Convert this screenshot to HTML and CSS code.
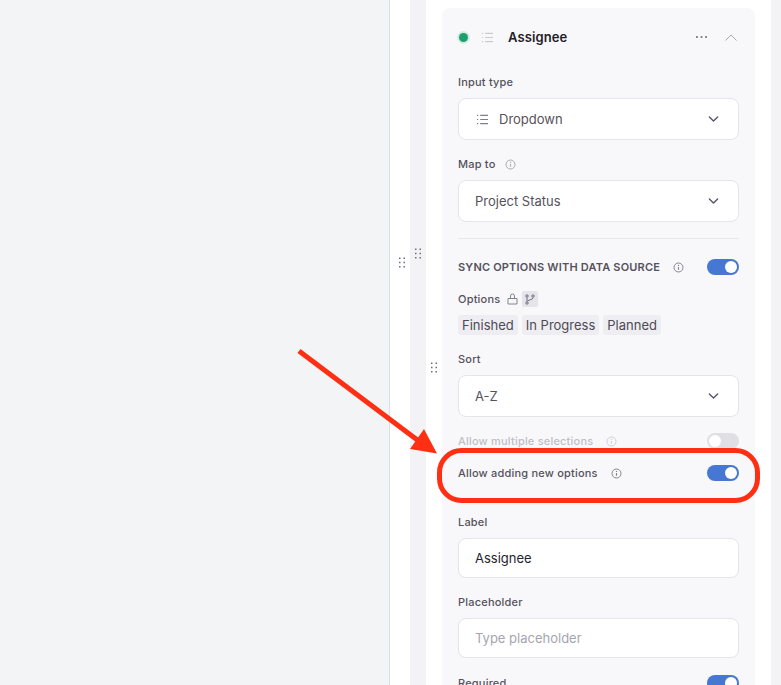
FILE: index.html
```html
<!DOCTYPE html>
<html lang="en">
<head>
<meta charset="utf-8">
<title>Assignee field settings</title>
<link rel="stylesheet" href="styles.css">
</head>
<body>
<svg width="0" height="0" class="defs">
  <defs>
    <symbol id="i-list" viewBox="0 0 14 12">
      <path d="M4.500 1.500H13M4.500 6H13M4.500 10.500H13M1 1.500H2.300M1 6H2.300M1 10.500H2.300" fill="none" stroke="currentColor" stroke-width="1.300"/>
    </symbol>
    <symbol id="i-chev" viewBox="0 0 12 8">
      <path d="M1.500 1.800 6 6.200l4.500-4.400" fill="none" stroke="currentColor" stroke-width="1.500" stroke-linecap="round" stroke-linejoin="round"/>
    </symbol>
    <symbol id="i-info" viewBox="0 0 11 11">
      <circle cx="5.500" cy="5.500" r="4.500" fill="none" stroke="currentColor" stroke-width="1"/>
      <path d="M5.500 5v2.800" fill="none" stroke="currentColor" stroke-width="1.100"/>
      <circle cx="5.500" cy="3.400" r=".7" fill="currentColor"/>
    </symbol>
    <symbol id="i-grip" viewBox="0 0 8 11">
      <path d="M1 .5h1.500V2H1zM5.500 .5H7V2H5.500zM1 4.750h1.500v1.500H1zM5.500 4.750H7v1.500H5.500zM1 9h1.500v1.500H1zM5.500 9H7v1.500H5.500z" fill="currentColor"/>
    </symbol>
  </defs>
</svg>

<div class="page">
  <aside class="left"></aside>
  <div class="white-col"></div>
  <div class="gray-col"></div>
  <main class="panel">
    <section class="card">
      <header class="card-head">
        <span class="status"></span>
        <svg class="head-list"><use href="#i-list"/></svg>
        <h2 class="title">Assignee</h2>
        <span class="head-more">
          <svg class="more" viewBox="0 0 12 2"><path d="M0 0h2v2H0zM5 0h2v2H5zM10 0h2v2h-2z" fill="currentColor"/></svg>
        </span>
        <svg class="head-up" viewBox="0 0 12 7"><path d="M.5 6.500 6 1l5.500 5.500" fill="none" stroke="currentColor" stroke-width="1"/></svg>
      </header>

      <label class="lab lab-first">Input type</label>
      <div class="box select">
        <svg class="sel-icon"><use href="#i-list"/></svg>
        <span class="val">Dropdown</span>
        <svg class="chev"><use href="#i-chev"/></svg>
      </div>

      <label class="lab lab-next">Map to <svg class="info map-info"><use href="#i-info"/></svg></label>
      <div class="box select">
        <span class="val">Project Status</span>
        <svg class="chev"><use href="#i-chev"/></svg>
      </div>

      <hr class="rule">

      <div class="row sync">
        <span class="upper">SYNC OPTIONS WITH DATA SOURCE</span>
        <svg class="info sync-info"><use href="#i-info"/></svg>
        <span class="toggle on"></span>
      </div>

      <div class="opts-head">
        <span class="lab-inline">Options</span>
        <svg class="lock" viewBox="0 0 11 12"><path d="M1 5.500h9v5.500H1zM3.500 5.500V3a2 2 0 0 1 4 0v2.500" fill="none" stroke="currentColor" stroke-width="1"/></svg>
        <span class="branch">
          <svg viewBox="0 0 10 11"><circle cx="2" cy="2" r="1.200" fill="none" stroke="currentColor"/><circle cx="2" cy="9" r="1.200" fill="none" stroke="currentColor"/><circle cx="8" cy="2" r="1.200" fill="none" stroke="currentColor"/><path d="M2 3.500v4M8 3.500C8 6 4 5.500 2.500 7" fill="none" stroke="currentColor"/></svg>
        </span>
      </div>
      <div class="tags">
        <span class="tag">Finished</span>
        <span class="tag">In Progress</span>
        <span class="tag">Planned</span>
      </div>

      <label class="lab lab-sort">Sort</label>
      <div class="box select">
        <span class="val">A-Z</span>
        <svg class="chev"><use href="#i-chev"/></svg>
      </div>

      <div class="row allow-multi">
        <span class="lab-inline faded">Allow multiple selections</span>
        <svg class="info row-info faded"><use href="#i-info"/></svg>
        <span class="toggle off"></span>
      </div>
      <div class="row allow-add">
        <span class="lab-inline">Allow adding new options</span>
        <svg class="info row-info"><use href="#i-info"/></svg>
        <span class="toggle on"></span>
      </div>

      <label class="lab lab-label">Label</label>
      <div class="box input"><span class="typed">Assignee</span></div>

      <label class="lab lab-next2">Placeholder</label>
      <div class="box input"><span class="ph">Type placeholder</span></div>

      <div class="row required">
        <span class="lab-inline">Required</span>
        <span class="toggle on"></span>
      </div>
    </section>
  </main>
  <div class="gray-right"></div>

  <svg class="grip g1"><use href="#i-grip"/></svg>
  <svg class="grip g2"><use href="#i-grip"/></svg>
  <svg class="grip g3"><use href="#i-grip"/></svg>

  <svg class="annot" viewBox="0 0 781 685">
    <path d="M299 351 420 442" fill="none" stroke="#ff2f13" stroke-width="5"/>
    <path d="M424 429 437 453.500 410 449z" fill="#ff2f13"/>
    <rect x="439.500" y="450.500" width="318" height="50" rx="22" fill="none" stroke="#ff2f13" stroke-width="5"/>
  </svg>
</div>
</body>
</html>
```

FILE: styles.css
```css
* { box-sizing: border-box; }
html, body { margin: 0; padding: 0; height: 100%; overflow: hidden; }
body { font-family: Inter, "Liberation Sans", sans-serif; color: #4d4a55; background: #fff; }
.defs { position: absolute; }

.page { position: relative; display: flex; width: 781px; height: 685px; overflow: hidden; }
.left { width: 390px; flex: none; background: #f3f4f6; border-right: 1px solid #dcdde1; }
.white-col { width: 20px; flex: none; background: #fff; }
.gray-col { width: 16px; flex: none; background: #f3f3f6; }
.panel { width: 345px; flex: none; background: #fff; padding: 8px 16px 0; }
.gray-right { width: 10px; flex: none; background: #f3f3f6; }

.card { width: 313px; height: 720px; background: #f8f8fb; border-radius: 8px; padding: 0 16px; }
.card-head { display: flex; align-items: center; height: 58px; }
.status { width: 9px; height: 9px; margin-left: 1px; border-radius: 50%; background: #1f9e6e; box-shadow: 0 0 0 2px #d5eee5; }
.head-list { width: 13px; height: 11px; margin-left: 13px; color: #c9c9d2; }
.title { margin: 0 0 0 14px; font-size: 13px; font-weight: 600; letter-spacing: .1px; color: #1f2026; line-height: 20px; }
.head-more { margin-left: auto; display: flex; }
.more { width: 11px; height: 2px; color: #85848e; display: block; }
.head-up { width: 12px; height: 7px; margin-left: 18px; margin-right: 2px; color: #a9a9b2; }

.lab { display: flex; align-items: center; font-size: 11px; font-weight: 500; line-height: 16px; color: #55525c; letter-spacing: .2px; }
.lab-first { margin-top: 8px; margin-bottom: 8px; }
.lab-next { margin-top: 16px; margin-bottom: 8px; }
.lab-sort { margin-top: 16px; margin-bottom: 8px; }
.lab-label { margin-top: 33px; margin-bottom: 8px; }
.lab-next2 { margin-top: 16px; margin-bottom: 8px; }
.lab-inline { font-size: 11px; font-weight: 500; line-height: 16px; color: #55525c; letter-spacing: .2px; }

.box { display: flex; align-items: center; width: 281px; background: #fff; border: 1px solid #e4e4ea; border-radius: 8px; padding: 0 16px; font-size: 13px; }
.select { height: 42px; color: #55525c; }
.input { height: 40px; }
.sel-icon { width: 13px; height: 11px; margin-left: 1px; margin-right: 10px; color: #7f7e88; }
.val { flex: 1; }
.chev { width: 11px; height: 8px; margin-right: 3px; color: #55536a; }
.typed { color: #24242c; }
.ph { color: #a5a5ae; }

.rule { border: 0; border-top: 1px solid #e7e7ec; margin: 16px 0 0; }

.row { display: flex; align-items: center; height: 16px; }
.sync { margin-top: 20px; }
.upper { font-size: 11px; font-weight: 600; letter-spacing: .19px; color: #55525c; }
.info { width: 11px; height: 11px; color: #85848e; flex: none; }
.map-info { margin-left: 9px; color: #a9a9b2; }
.sync-info { margin-left: 13px; }
.row-info { margin-left: 13px; }
.faded { opacity: .35; }
.toggle { position: relative; width: 32px; height: 16px; margin-left: auto; border-radius: 8px; flex: none; }
.toggle::after { content: ""; position: absolute; top: 2px; width: 12px; height: 12px; border-radius: 50%; background: #fff; }
.toggle.on { background: #4677d2; }
.toggle.on::after { right: 2px; }
.toggle.off { background: #dfdfe4; }
.toggle.off::after { left: 2px; }

.opts-head { display: flex; align-items: center; height: 16px; margin-top: 16px; }
.lock { width: 11px; height: 12px; margin-left: 7px; color: #85848e; }
.branch { display: flex; align-items: center; justify-content: center; width: 16px; height: 16px; margin-left: 4px; border-radius: 2px; background: #e4e4ea; color: #6f6e78; }
.branch svg { width: 10px; height: 11px; }

.tags { display: flex; gap: 4px; margin-top: 8px; }
.tag { height: 20px; line-height: 20px; padding: 0 4px; border-radius: 3px; background: #eeeef2; font-size: 13px; color: #4d4a55; }

.allow-multi { margin-top: 16px; }
.allow-add { margin-top: 16px; }
.required { margin-top: 17px; }

.grip { position: absolute; width: 8px; height: 11px; color: #6f6e78; }
.g1 { left: 414px; top: 248px; }
.g2 { left: 398px; top: 257px; }
.g3 { left: 430px; top: 362px; }
.annot { position: absolute; left: 0; top: 0; width: 781px; height: 685px; pointer-events: none; }
```
